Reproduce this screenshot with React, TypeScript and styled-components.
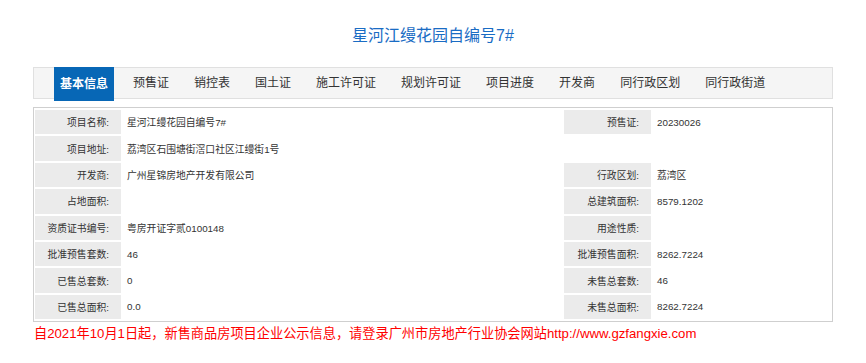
import styled, { createGlobalStyle } from "styled-components";

const GlobalStyle = createGlobalStyle`
  body {
    margin: 0;
    background: #ffffff;
    font-family: "Liberation Sans", "Noto Sans CJK SC", sans-serif;
    color: #333333;
  }
`;

const tabs = [
  "基本信息",
  "预售证",
  "销控表",
  "国土证",
  "施工许可证",
  "规划许可证",
  "项目进度",
  "开发商",
  "同行政区划",
  "同行政街道",
];

type Row = {
  label: string;
  value: string;
  label2?: string;
  value2?: string;
};

const rows: Row[] = [
  { label: "项目名称", value: "星河江缦花园自编号7#", label2: "预售证", value2: "20230026" },
  { label: "项目地址", value: "荔湾区石围塘街滘口社区江缦街1号" },
  { label: "开发商", value: "广州星锦房地产开发有限公司", label2: "行政区划", value2: "荔湾区" },
  { label: "占地面积", value: "", label2: "总建筑面积", value2: "8579.1202" },
  { label: "资质证书编号", value: "粤房开证字贰0100148", label2: "用途性质", value2: "" },
  { label: "批准预售套数", value: "46", label2: "批准预售面积", value2: "8262.7224" },
  { label: "已售总套数", value: "0", label2: "未售总套数", value2: "46" },
  { label: "已售总面积", value: "0.0", label2: "未售总面积", value2: "8262.7224" },
];

const App = () => {
  return (
    <>
      <GlobalStyle />
      <Page>
        <Title>星河江缦花园自编号7#</Title>

        <TabBar>
          {tabs.map((t, i) => (
            <Tab key={t} $active={i === 0}>
              {t}
            </Tab>
          ))}
        </TabBar>

        <InfoTable>
          <colgroup>
            <col style={{ width: 86 }} />
            <col style={{ width: 441 }} />
            <col style={{ width: 87 }} />
            <col style={{ width: 179 }} />
          </colgroup>
          <tbody>
            {rows.map((r) => (
              <tr key={r.label}>
                <Label>{r.label}:</Label>
                {r.label2 === undefined ? (
                  <Value colSpan={3}>{r.value}</Value>
                ) : (
                  <>
                    <Value>{r.value}</Value>
                    <Label>{r.label2}:</Label>
                    <Value>{r.value2}</Value>
                  </>
                )}
              </tr>
            ))}
          </tbody>
        </InfoTable>

        <Notice>
          自2021年10月1日起，新售商品房项目企业公示信息，请登录广州市房地产行业协会网站http://www.gzfangxie.com
        </Notice>
      </Page>
    </>
  );
};

export default App;

const Page = styled.div`
  width: 800px;
  margin: 0 auto;
`;

const Title = styled.h1`
  margin: 0 0 19px;
  padding-top: 24px;
  font-family: "Liberation Sans", "Noto Sans CJK SC", sans-serif;
  font-size: 16px;
  font-weight: 400;
  line-height: 24px;
  text-align: center;
  color: #1a6cc4;
`;

const TabBar = styled.div`
  display: flex;
  align-items: flex-start;
  gap: 13px;
  height: 30px;
  padding-left: 20px;
  background: #f5f5f5;
  border: 1px solid #e0e0e0;
`;

const Tab = styled.div<{ $active?: boolean }>`
  padding: 0 6px;
  height: ${(p) => (p.$active ? "34px" : "30px")};
  margin-top: ${(p) => (p.$active ? "-1px" : "0")};
  line-height: ${(p) => (p.$active ? "34px" : "30px")};
  font-size: 12px;
  font-weight: ${(p) => (p.$active ? 700 : 400)};
  color: ${(p) => (p.$active ? "#ffffff" : "#333333")};
  background: ${(p) => (p.$active ? "#0767b6" : "transparent")};
  white-space: nowrap;
  cursor: pointer;
`;

const InfoTable = styled.table`
  width: 800px;
  margin-top: 8px;
  table-layout: fixed;
  border: 1px solid #cfcfcf;
  border-collapse: separate;
  border-spacing: 1px 2px;
  font-size: 9.8px;
`;

const Label = styled.td`
  height: 24.4px;
  padding: 0 12px 0 0;
  background: #ebebeb;
  text-align: right;
  vertical-align: middle;
  color: #333333;
  white-space: nowrap;
`;

const Value = styled.td`
  height: 24.4px;
  padding: 0 0 0 5px;
  background: #ffffff;
  text-align: left;
  vertical-align: middle;
  color: #333333;
  white-space: nowrap;
`;

const Notice = styled.p`
  margin: 3px 0 0;
  padding-left: 1px;
  font-size: 13.2px;
  line-height: 18px;
  color: #ff0000;
  white-space: nowrap;
`;
